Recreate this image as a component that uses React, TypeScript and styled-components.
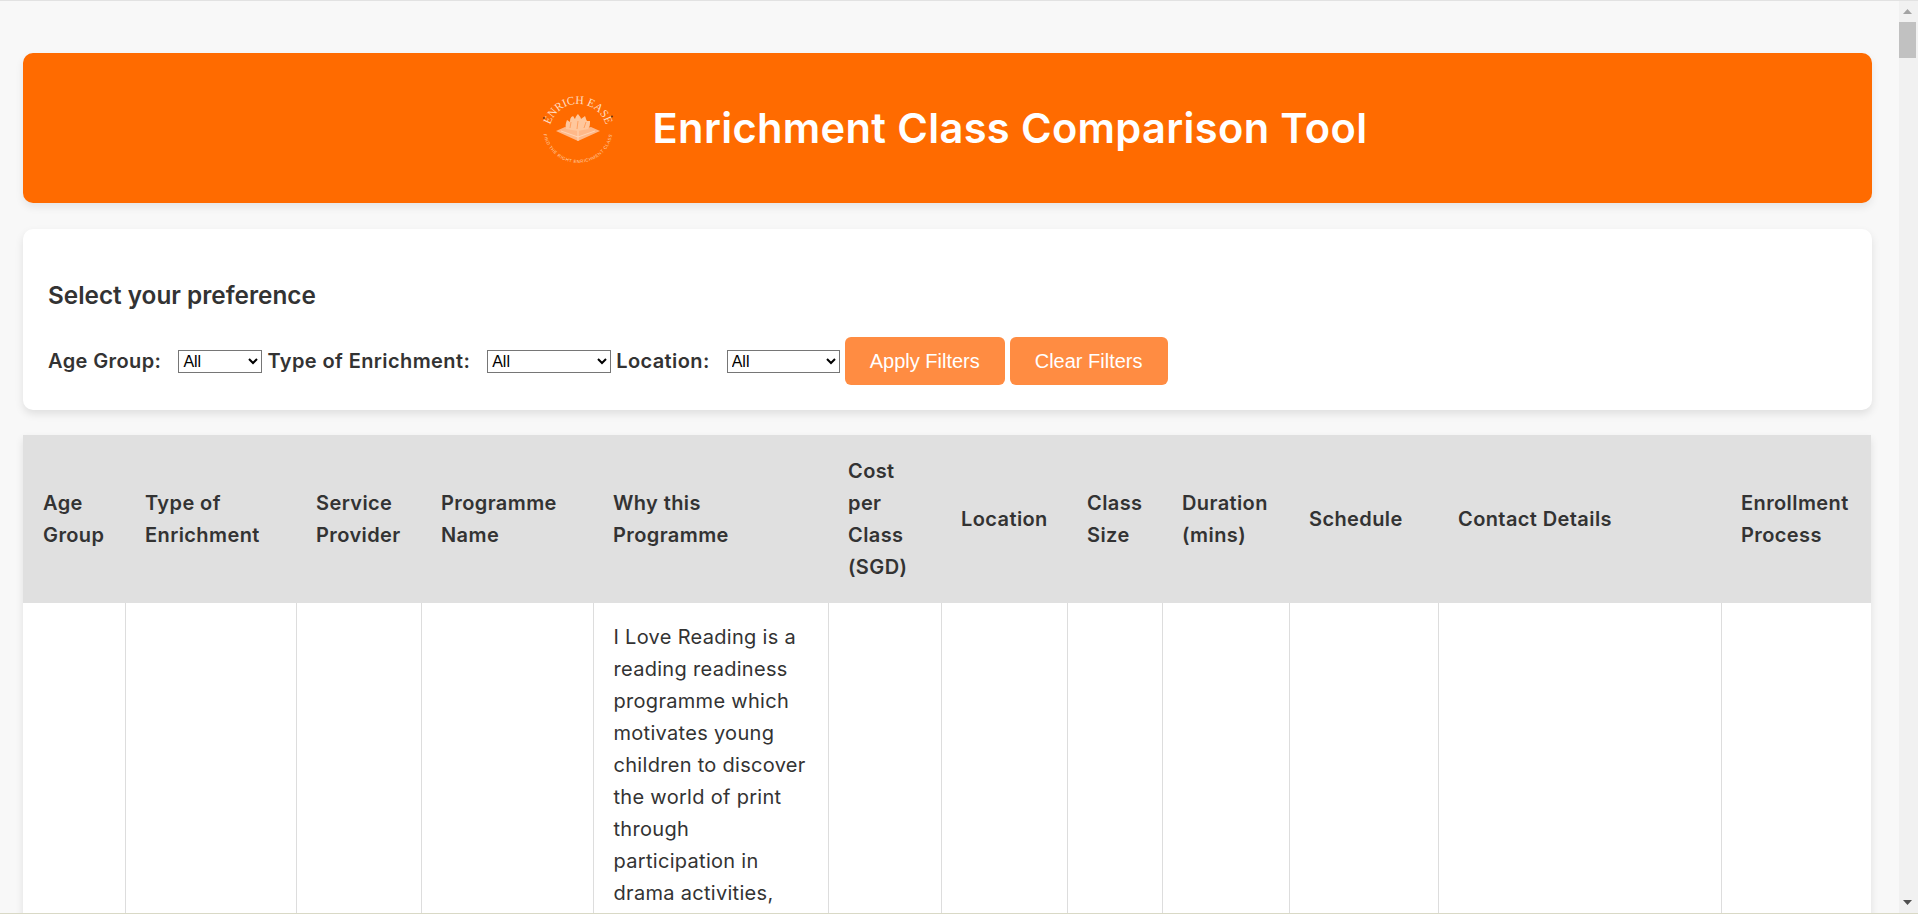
import * as React from 'react'
import styled, { createGlobalStyle } from 'styled-components'

const GlobalStyle = createGlobalStyle`
  html, body {
    margin: 0;
    padding: 0;
    height: 914px;
    overflow: hidden;
    background: #f8f8f8;
  }
`

const Screen = styled.div`
  display: flex;
  flex-direction: column;
  height: 914px;
  box-sizing: border-box;
  border-top: 1px solid #e2e2e2;
  border-bottom: 1px solid #d9d9c6;
  overflow: hidden;
`

const Viewport = styled.div`
  flex: 1;
  min-height: 0;
  display: flex;
`

const Main = styled.main`
  flex: 1;
  min-width: 0;
  padding: 52px 27px 0 23px;
  font-family: 'Inter', 'Liberation Sans', sans-serif;
  color: #333;
  overflow: hidden;
`

const Banner = styled.header`
  height: 150px;
  display: flex;
  align-items: center;
  justify-content: center;
  gap: 25px;
  background: #ff6b00;
  border-radius: 10px;
  box-shadow: 0 4px 8px rgba(0, 0, 0, 0.08);
  margin-bottom: 26px;
`

const Title = styled.h1`
  margin: 0;
  font-size: 41.6px;
  font-weight: 600;
  line-height: 60px;
  color: #fff;
  white-space: nowrap;
  letter-spacing: 0.35px;
`

const Panel = styled.section`
  height: 181px;
  box-sizing: border-box;
  padding: 50px 25px 0;
  background: #fff;
  border-radius: 10px;
  box-shadow: 0 4px 8px rgba(0, 0, 0, 0.1);
  margin-bottom: 25px;
`

const PanelTitle = styled.h2`
  margin: 0 0 26px;
  font-size: 24.3px;
  font-weight: 600;
  line-height: 32px;
`

const FilterRow = styled.div`
  display: flex;
  align-items: center;
  height: 48px;
`

const FilterLabel = styled.label`
  font-size: 20px;
  font-weight: 600;
  letter-spacing: 0.4px;
  white-space: nowrap;
  margin-right: 17px;
`

const FilterSelect = styled.select<{ $width: number }>`
  width: ${p => p.$width}px;
  height: 23px;
  margin-right: 5px;
  font-family: 'Liberation Sans', Arial, sans-serif;
  font-size: 16px;
  background: #fff;
`

const FilterButton = styled.button`
  height: 48px;
  padding: 0 25px;
  margin-right: 5px;
  border: 0;
  border-radius: 6px;
  background: #ff8c42;
  color: #fff;
  font-family: 'Liberation Sans', Arial, sans-serif;
  font-size: 20px;
`

const Table = styled.table`
  width: 1848px;
  table-layout: fixed;
  border-collapse: collapse;
  background: #fff;
  box-shadow: 0 4px 8px rgba(0, 0, 0, 0.1);
`

const HeadCell = styled.th`
  padding: 20px 20px;
  background: #e0e0e0;
  font-size: 20px;
  font-weight: 600;
  letter-spacing: 0.4px;
  line-height: 32px;
  text-align: left;
  vertical-align: middle;
`

const BodyCell = styled.td`
  padding: 18px 20px 20px;
  font-size: 20px;
  font-weight: 400;
  letter-spacing: 0.3px;
  line-height: 32px;
  vertical-align: top;
  border-right: 1px solid #ddd;

  &:last-child {
    border-right: 0;
  }
`

const ColumnWidth = styled.col<{ $width: number }>`
  width: ${p => p.$width}px;
`

const ScrollTrack = styled.aside`
  width: 19px;
  flex: none;
  display: flex;
  flex-direction: column;
  background: #f1f1f1;
`

const ScrollArrow = styled.div<{ $down?: boolean }>`
  height: 21px;
  display: flex;
  align-items: center;
  justify-content: center;
  padding-right: 2px;
  color: ${p => (p.$down ? '#505050' : '#a3a3a3')};
  margin-top: ${p => (p.$down ? 'auto' : '0')};
`

const ScrollThumb = styled.div`
  width: 17px;
  height: 36px;
  background: #c1c1c1;
`

const columns: { label: string; width: number }[] = [
  { label: 'Age Group', width: 102 },
  { label: 'Type of Enrichment', width: 171 },
  { label: 'Service Provider', width: 125 },
  { label: 'Programme Name', width: 172 },
  { label: 'Why this Programme', width: 235 },
  { label: 'Cost per Class (SGD)', width: 113 },
  { label: 'Location', width: 126 },
  { label: 'Class Size', width: 95 },
  { label: 'Duration (mins)', width: 127 },
  { label: 'Schedule', width: 149 },
  { label: 'Contact Details', width: 283 },
  { label: 'Enrollment Process', width: 150 },
]

const whyText =
  'I Love Reading is a reading readiness programme which motivates young children to discover the world of print through participation in drama activities,'

function Logo() {
  return (
    <svg width="100" height="100" viewBox="0 0 100 100" aria-hidden="true">
      <defs>
        <path id="logo-top" d="M21 55a29 29 0 1 1 58 0" />
        <path id="logo-bottom" d="M15.500 44a35 35 0 1 0 69 0" />
      </defs>
      <text fill="#ffdcc0" fontSize="11.500" fontFamily="'Liberation Serif', serif">
        <textPath href="#logo-top" startOffset="50%" textAnchor="middle">
          ENRICH EASE
        </textPath>
      </text>
      <text fill="#ffd3b0" fontSize="4.400" letterSpacing="0.5" fontFamily="'Liberation Sans', sans-serif">
        <textPath href="#logo-bottom" startOffset="50%" textAnchor="middle">
          FIND THE RIGHT ENRICHMENT CLASS
        </textPath>
      </text>
      <circle cx="16" cy="40" r="1.100" fill="#7a3a10" />
      <circle cx="84" cy="38.500" r="1.100" fill="#7a3a10" />
      <path d="M28 53l9-4 13 3 13-3 9 4-22 10z" fill="#ffb888" />
      <path d="M50 52v11M33 53l17 6 17-6" stroke="#ffdfc6" strokeWidth="0.7" fill="none" />
      <path
        d="M38 51c-1-4 0-6 1-9 1 1 2 1 3 2 0-4 1-5 3-6 1 1 1 2 2 3 1-3 2-4 3-5 1 2 3 3 3 5 1-1 3-2 4-3 1 2 1 4 2 5 1 0 2 0 3 0 0 3 0 6-2 8l-10 2z"
        fill="#ffc79c"
      />
      <path d="M42 50l1-6M49 51l1-8M56 50l2-6" stroke="#ff8f45" strokeWidth="0.7" fill="none" />
    </svg>
  )
}

function Arrow({ down }: { down?: boolean }) {
  return (
    <svg width="9" height="5" viewBox="0 0 9 5" aria-hidden="true">
      <path d={down ? 'M0 0h9L4.500 5z' : 'M0 5h9L4.500 0z'} fill="currentColor" />
    </svg>
  )
}

export default function App() {
  return (
    <>
      <GlobalStyle />
      <Screen>
        <Viewport>
          <Main>
            <Banner>
              <Logo />
              <Title>Enrichment Class Comparison Tool</Title>
            </Banner>

            <Panel>
              <PanelTitle>Select your preference</PanelTitle>
              <FilterRow>
                <FilterLabel>Age Group:</FilterLabel>
                <FilterSelect $width={84}>
                  <option>All</option>
                </FilterSelect>
                <FilterLabel>Type of Enrichment:</FilterLabel>
                <FilterSelect $width={124}>
                  <option>All</option>
                </FilterSelect>
                <FilterLabel>Location:</FilterLabel>
                <FilterSelect $width={113}>
                  <option>All</option>
                </FilterSelect>
                <FilterButton>Apply Filters</FilterButton>
                <FilterButton>Clear Filters</FilterButton>
              </FilterRow>
            </Panel>

            <Table>
              <colgroup>
                {columns.map(c => (
                  <ColumnWidth key={c.label} $width={c.width} />
                ))}
              </colgroup>
              <thead>
                <tr>
                  {columns.map(c => (
                    <HeadCell key={c.label}>{c.label}</HeadCell>
                  ))}
                </tr>
              </thead>
              <tbody>
                <tr>
                  {columns.map(c => (
                    <BodyCell key={c.label}>{c.label === 'Why this Programme' && whyText}</BodyCell>
                  ))}
                </tr>
              </tbody>
            </Table>
          </Main>

          <ScrollTrack>
            <ScrollArrow>
              <Arrow />
            </ScrollArrow>
            <ScrollThumb />
            <ScrollArrow $down>
              <Arrow down />
            </ScrollArrow>
          </ScrollTrack>
        </Viewport>
      </Screen>
    </>
  )
}
